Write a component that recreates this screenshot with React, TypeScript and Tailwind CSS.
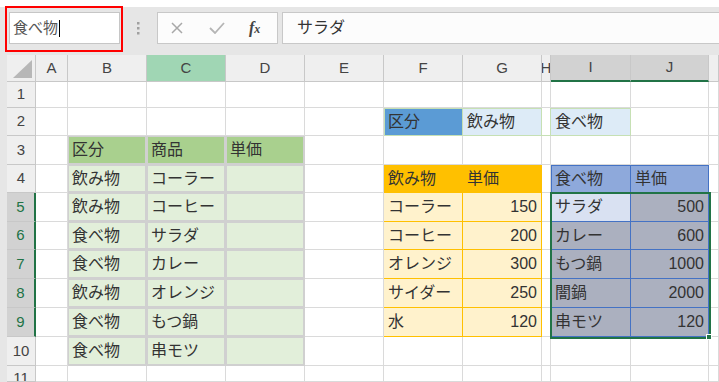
import React from 'react'

const COLS = ['#', 'A', 'B', 'C', 'D', 'E', 'F', 'G', 'H', 'I', 'J', 'K']
const ROWS = [0, 1, 2, 3, 4, 5, 6, 7, 8, 9, 10, 11]

const leftTable: Record<number, [string, string]> = {
  4: ['飲み物', 'コーラー'],
  5: ['飲み物', 'コーヒー'],
  6: ['食べ物', 'サラダ'],
  7: ['食べ物', 'カレー'],
  8: ['飲み物', 'オレンジ'],
  9: ['食べ物', 'もつ鍋'],
  10: ['食べ物', '串モツ'],
}

const drinks: Record<number, [string, string]> = {
  5: ['コーラー', '150'],
  6: ['コーヒー', '200'],
  7: ['オレンジ', '300'],
  8: ['サイダー', '250'],
  9: ['水', '120'],
}

const foods: Record<number, [string, string]> = {
  5: ['サラダ', '500'],
  6: ['カレー', '600'],
  7: ['もつ鍋', '1000'],
  8: ['闇鍋', '2000'],
  9: ['串モツ', '120'],
}

interface CellInfo {
  text?: string
  cls: string
  right?: boolean
}

const plain = 'bg-white border-r border-b border-[#dadada]'
const grayTable = 'bg-[#e2efda] border-r border-b border-[#d0d0d0] shadow-[inset_0_0_0_1px_#d0d0d0]'
const grayHead = 'bg-[#a9d08e] border-r border-b border-[#d0d0d0] shadow-[inset_0_0_0_1px_#d0d0d0]'

const getCell = (col: string, row: number): CellInfo => {
  if (row === 2) {
    if (col === 'F') return { text: '区分', cls: 'bg-[#5b9bd5] border-r border-b border-[#c6e0b4] shadow-[inset_1px_1px_0_#c6e0b4]' }
    if (col === 'G') return { text: '飲み物', cls: 'bg-[#ddebf7] border-r border-b border-[#c6e0b4] shadow-[inset_0_1px_0_#c6e0b4]' }
    if (col === 'H') return { cls: 'bg-white border-r border-b border-[#c6e0b4]' }
    if (col === 'I') return { text: '食べ物', cls: 'bg-[#ddebf7] border-r border-b border-[#c6e0b4] shadow-[inset_0_1px_0_#c6e0b4]' }
  }
  if (row === 3 && col === 'B') return { text: '区分', cls: grayHead }
  if (row === 3 && col === 'C') return { text: '商品', cls: grayHead }
  if (row === 3 && col === 'D') return { text: '単価', cls: grayHead }
  if (row >= 4 && row <= 10) {
    if (col === 'B') return { text: leftTable[row][0], cls: grayTable }
    if (col === 'C') return { text: leftTable[row][1], cls: grayTable }
    if (col === 'D') return { cls: grayTable }
  }
  if (row === 4) {
    if (col === 'F') return { text: '飲み物', cls: 'bg-[#ffc000] border-r border-b border-[#ffc000]' }
    if (col === 'G') return { text: '単価', cls: 'bg-[#ffc000] border-r border-b border-[#ffc000]' }
    if (col === 'I') return { text: '食べ物', cls: 'bg-[#8ea9db] border-r border-b border-[#4472c4] shadow-[inset_1px_1px_0_#4472c4]' }
    if (col === 'J') return { text: '単価', cls: 'bg-[#8ea9db] border-r border-b border-[#4472c4] shadow-[inset_0_1px_0_#4472c4]' }
  }
  if (row >= 5 && row <= 9) {
    if (col === 'F') return { text: drinks[row][0], cls: 'bg-[#fff2cc] border-r border-b border-[#ffc000]' }
    if (col === 'G') return { text: drinks[row][1], right: true, cls: 'bg-[#fff2cc] border-r border-b border-[#ffc000]' }
    if (col === 'I') {
      const bg = row === 5 ? 'bg-[#d9e1f2]' : 'bg-[#abb0bf]'
      return { text: foods[row][0], cls: `${bg} border-r border-b border-[#4472c4] shadow-[inset_1px_0_0_#4472c4]` }
    }
    if (col === 'J') return { text: foods[row][1], right: true, cls: 'bg-[#abb0bf] border-r border-b border-[#4472c4]' }
  }
  return { cls: plain }
}

const colHeaderCls = (col: string) => {
  if (col === 'C') return 'bg-[#a0d6b4] border-r border-b border-[#c8c8c8]'
  if (col === 'I' || col === 'J') return 'bg-[#d2d2d2] border-r border-[#c8c8c8] border-b-2 border-b-[#217346]'
  return 'bg-[#efefef] border-r border-b border-[#c8c8c8]'
}

const rowHeaderCls = (row: number) => {
  if (row >= 5 && row <= 9) return 'bg-[#d2d2d2] text-[#217346] border-b border-[#c8c8c8] border-r-2 border-r-[#217346]'
  return 'bg-[#efefef] text-[#444] border-r border-b border-[#c8c8c8]'
}

const Grid = () => {
  return (
    <div className="relative ml-[7px] grid grid-cols-[29px_32px_79px_79px_79px_79px_79px_79px_9px_80px_78px_10px] grid-rows-[27px_26px_28px_29px_28px_29px_28px_29px_29px_29px_29px_16px]">
      {ROWS.map((row) =>
        COLS.map((col) => {
          if (row === 0 && col === '#') {
            return (
              <div key="corner" className="bg-[#efefef] border-r border-b border-[#c8c8c8] relative">
                <svg className="absolute left-[6px] top-[5px]" width="20" height="19" viewBox="0 0 20 19">
                  <polygon points="0,18 19,18 19,0" fill="#b7b7b7" />
                </svg>
              </div>
            )
          }
          if (row === 0) {
            return (
              <div
                key={`h-${col}`}
                className={`${colHeaderCls(col)} flex items-center justify-center overflow-hidden text-[15px] text-[#444]`}
              >
                {col === 'K' ? '' : col}
              </div>
            )
          }
          if (col === '#') {
            return (
              <div
                key={`r-${row}`}
                className={`${rowHeaderCls(row)} flex justify-center overflow-hidden text-[15px] ${
                  row === 11 ? 'items-start pt-[4px] leading-none' : 'items-center'
                }`}
              >
                {row}
              </div>
            )
          }
          const cell = getCell(col, row)
          return (
            <div
              key={`${col}${row}`}
              className={`${cell.cls} flex items-center overflow-hidden whitespace-nowrap text-[16px] text-[#333] ${
                cell.right ? 'justify-end pr-[4px]' : 'pl-[4px]'
              }`}
            >
              {cell.text}
            </div>
          )
        })
      )}

      {/* selection I5:J9 */}
      <div className="absolute left-[543px] top-[137px] w-[161px] h-[147px] border-2 border-[#217346] pointer-events-none" />
      <div className="absolute left-[699px] top-[279px] w-[6px] h-[6px] bg-[#217346] border border-white" />
    </div>
  )
}

const FormulaBar = () => {
  return (
    <div className="h-[48px] bg-[#e6e6e6] flex items-start pt-[5px]">
      <div className="ml-[9px] w-[111px] h-[32px] bg-white border border-[#c6c6c6] flex items-center pl-[3px] text-[15px] text-[#555]">
        食べ物
        <span className="ml-[1px] inline-block w-[1px] h-[17px] bg-black" />
      </div>
      <div className="w-[37px] h-[32px] flex items-center justify-center">
        <svg width="3" height="13" viewBox="0 0 3 13">
          <rect x="0" y="0" width="2.5" height="2.5" fill="#a0a0a0" />
          <rect x="0" y="5" width="2.5" height="2.5" fill="#a0a0a0" />
          <rect x="0" y="10" width="2.5" height="2.5" fill="#a0a0a0" />
        </svg>
      </div>
      <div className="w-[121px] h-[32px] bg-[#fcfcfc] border border-[#c8c8c8] flex items-center">
        <svg className="ml-[13px]" width="12" height="12" viewBox="0 0 12 12">
          <path d="M1 1 L11 11 M11 1 L1 11" stroke="#a8a8a8" strokeWidth="1.5" fill="none" />
        </svg>
        <svg className="ml-[26px]" width="16" height="12" viewBox="0 0 16 12">
          <path d="M1 6 L6 11 L15 1" stroke="#b5b5b5" strokeWidth="1.8" fill="none" />
        </svg>
        <span className="ml-[24px] font-['Liberation_Serif'] italic font-bold text-[#444] text-[16px] leading-none">
          f<span className="text-[12px]">x</span>
        </span>
      </div>
      <div className="ml-[4px] flex-1 h-[32px] bg-[#fcfcfc] border-y border-l border-[#c8c8c8] flex items-center pl-[14px] text-[16px] text-[#333]">
        サラダ
      </div>
    </div>
  )
}

const App = () => {
  return (
    <div className="relative w-[719px] h-[382px] overflow-hidden bg-[#e6e6e6] font-['Liberation_Sans','Noto_Sans_CJK_JP',sans-serif]">
      <div className="h-[7px] bg-white" />
      <FormulaBar />
      <Grid />
      {/* annotation */}
      <div className="absolute left-[5px] top-[6px] w-[118px] h-[46px] border-2 border-[#ff0000]" />
    </div>
  )
}

export default App
